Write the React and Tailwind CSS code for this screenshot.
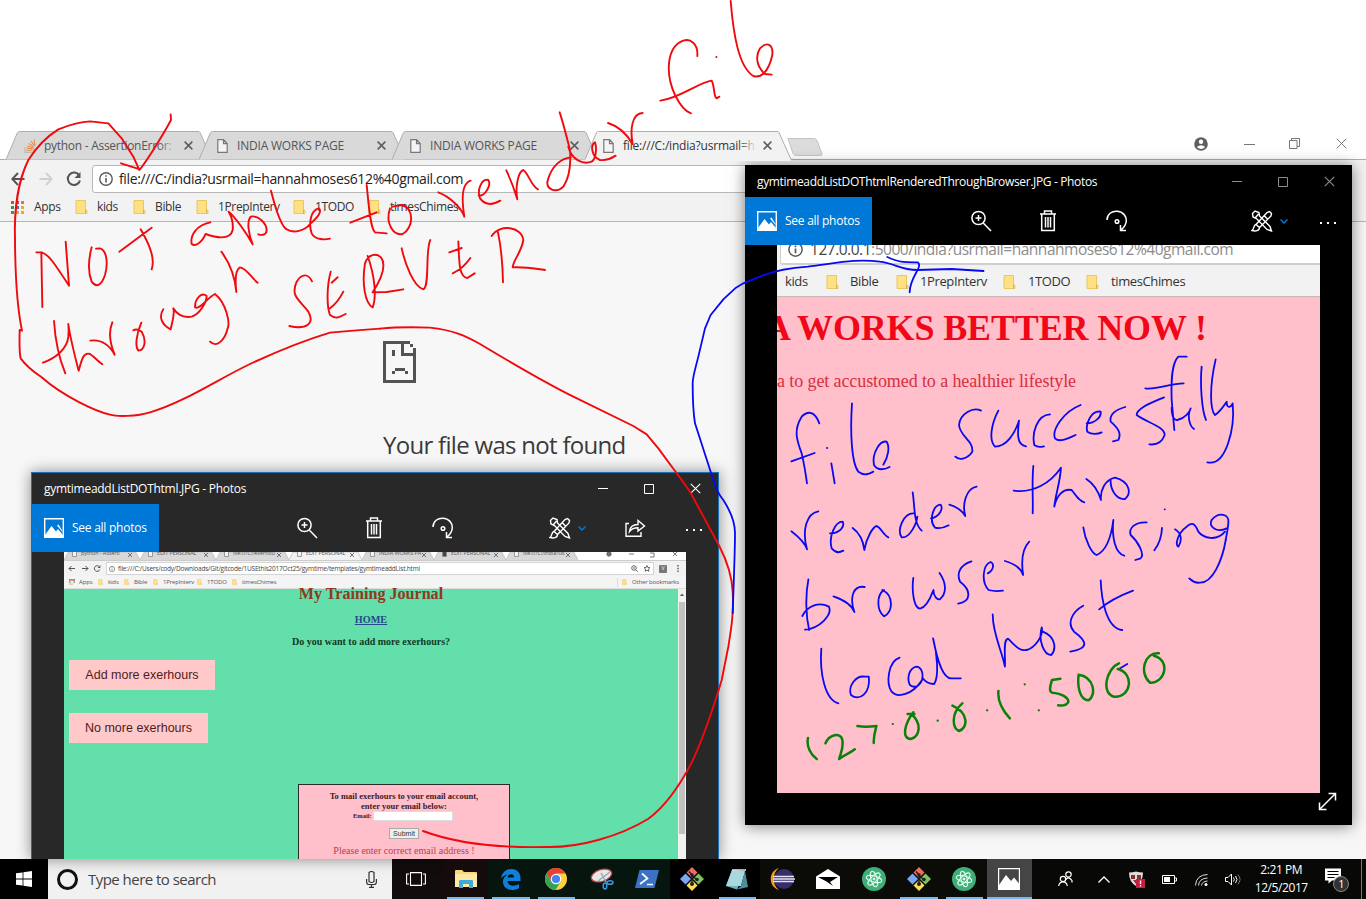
import React from "react";

const UI = "font-['Open_Sans','Noto_Sans',sans-serif]";
const SERIF = "font-['Liberation_Serif',serif]";

function FileIcon() {
  return (
    <svg width="11" height="14" viewBox="0 0 11 14" fill="#f4f4f4" stroke="#777" strokeWidth="1.2">
      <path d="M.8.7h5.8l3.6 3.8v8.8H.8zM6.5.7v4h3.7" />
    </svg>
  );
}

function StackIcon() {
  return (
    <svg width="13" height="14" viewBox="0 0 13 14" fill="none">
      <path d="M1 8v5.3h9V8" stroke="#bcbbbb" strokeWidth="1.2" />
      <path d="M2.5 11.3h6M2.7 9.3l6 .5M3.3 7l5.7 1.8M4.6 4.4l5 3.3M7 2l3.3 4.8M10 .5l1 5.8" stroke="#f08a3c" strokeWidth="1.1" />
    </svg>
  );
}

function Close({ size = 9, color = "#5a5a5a", w = 1.6 }) {
  return (
    <svg width={size} height={size} viewBox="0 0 10 10" stroke={color} strokeWidth={w}>
      <path d="M.7.7l8.6 8.6M9.3.7L.7 9.3" />
    </svg>
  );
}

function Tab({ icon, title, active, className }) {
  return (
    <div className={`relative w-[206px] h-[29px] shrink-0 flex items-center pl-[18px] -mr-[13px] ${active ? "z-10" : ""}`}>
      <svg className="absolute left-0 top-0" width="206" height="30" viewBox="0 0 206 30">
        {active && <path d="M0 28h206v2H0z" fill="#f2f2f2" />}
        <path d="M0 28.5 11.500 1.500Q12 .5 13.500 .5H192q1.500 0 2 1L206 28.500" fill={active ? "#f2f2f2" : "#d9d9d9"} stroke="#adadad" />
      </svg>
      <div className="relative w-[13px] flex">{icon}</div>
      <div className={`relative ml-[7px] w-[134px] overflow-hidden whitespace-nowrap text-[12px] ${className} ${active ? "text-[#333]" : "text-[#555]"}`}>
        {title}
        <div className={`absolute right-0 top-0 h-full w-5 bg-gradient-to-r from-transparent ${active ? "to-[#f2f2f2]" : "to-[#d9d9d9]"}`} />
      </div>
      <div className="relative ml-[6px]"><Close /></div>
    </div>
  );
}

function Folder({ s = 13 }) {
  return (
    <svg width={s} height={s + 1} viewBox="0 0 13 14">
      <path d="M1 .5h9.500v9l1.500 1v3H1z" fill="#ffe083" stroke="#e8c765" />
      <path d="M10.500 9.500v4" stroke="#d9b24a" />
    </svg>
  );
}

function Mark({ label, w, className = "" }) {
  return (
    <div className={`flex items-center shrink-0 ${w}`}>
      <Folder />
      <span className={`ml-[9px] whitespace-nowrap ${className}`}>{label}</span>
    </div>
  );
}

function InfoIcon({ s = 14 }) {
  return (
    <svg width={s} height={s} viewBox="0 0 14 14" fill="none" stroke="#5a5a5a" strokeWidth="1.400">
      <circle cx="7" cy="7" r="6.200" /><path d="M7 6v4.500M7 3.300v1.500" strokeWidth="1.600" />
    </svg>
  );
}

function Browser() {
  return (
    <div className="h-[859px] pt-[131px] flex flex-col">
      <div className="h-[29px] flex pl-[6px] shrink-0 border-b border-[#adadad]">
        <Tab icon={<StackIcon />} title="python - AssertionError:" className="tracking-[-0.28px]" />
        <Tab icon={<FileIcon />} title="INDIA WORKS PAGE" className="tracking-[-0.2px]" />
        <Tab icon={<FileIcon />} title="INDIA WORKS PAGE" className="tracking-[-0.2px]" />
        <Tab icon={<FileIcon />} title="file:///C:/india?usrmail=h" active className="tracking-[-0.2px]" />
        <svg className="mt-[7px] ml-[9px]" width="36" height="18" viewBox="0 0 36 18">
          <path d="M.8.5H27q2 0 3 2L35 16q0 1.500-1 1.500H9q-2 0-3-2z" fill="#dcdcdc" stroke="#c4c4c4" />
        </svg>
        <div className="ml-auto flex items-start pt-[6px] pr-[19px]">
          <svg width="14" height="14" viewBox="0 0 14 14"><circle cx="7" cy="7" r="6.800" fill="#5f5f5f" /><circle cx="7" cy="4.800" r="2.200" fill="#fff" /><path d="M2.800 10q4.200-3.300 8.400 0-4.200 4-8.400 0z" fill="#fff" /></svg>
          <div className="w-[11px] h-px bg-[#777] ml-[36px] mt-[7px]" />
          <svg className="ml-[34px] mt-[1px]" width="11" height="11" viewBox="0 0 11 11" fill="none" stroke="#777"><path d="M.5 2.500h7.500v8H.5zM2.500 2.500v-2h8v8H8" /></svg>
          <div className="ml-[36px] mt-[1px]"><Close size={11} color="#777" w={0.9} /></div>
        </div>
      </div>
      <div className="h-[62px] bg-[#f2f2f2] border-b border-[#b5b5b5] flex flex-col shrink-0">
        <div className="flex h-[37px] items-center pl-[11px] shrink-0">
          <svg width="14" height="14" viewBox="0 0 14 14" fill="none" stroke="#555" strokeWidth="2"><path d="M13.500 7H1.500M7 1 1.300 7 7 13" /></svg>
          <svg className="ml-[14px]" width="14" height="14" viewBox="0 0 14 14" fill="none" stroke="#d0d0d0" strokeWidth="2"><path d="M.5 7h12M7 1l5.700 6L7 13" /></svg>
          <svg className="ml-[13px]" width="16" height="16" viewBox="0 0 16 16" fill="none" stroke="#555" strokeWidth="2"><path d="M13.300 4.500A6.200 6.200 0 1 0 14 9.500" /><path d="M14.500 1v6h-6z" fill="#555" stroke="none" /></svg>
          <div className="ml-[10px] w-[1204px] h-[28px] bg-white border border-[#b8b8b8] rounded-[3px] flex items-center pl-[6px]">
            <InfoIcon />
            <span className="ml-[6px] text-[14px] tracking-[-0.36px] whitespace-nowrap text-[#222]">file:///C:/india?usrmail=hannahmoses612%40gmail.com</span>
          </div>
        </div>
        <div className="flex items-center h-[20px] pl-[11px] text-[12px] tracking-[-0.36px] text-[#333]">
          <svg width="13" height="13" viewBox="0 0 13 13">
            <path d="M0 0h3v3H0zM5 0h3v3H5z" fill="#d9483b" /><path d="M10 0h3v3h-3z" fill="#dd7a33" />
            <path d="M0 5h3v3H0z" fill="#3b8f55" /><path d="M5 5h3v3H5z" fill="#4579c9" /><path d="M10 5h3v3h-3zM10 10h3v3h-3z" fill="#e5ab2e" />
            <path d="M0 10h3v3H0z" fill="#44915b" /><path d="M5 10h3v3H5z" fill="#e5ab2e" />
          </svg>
          <span className="ml-[10px] w-[41px]">Apps</span>
          <Mark label="kids" w="w-[58px]" />
          <Mark label="Bible" w="w-[63px]" />
          <Mark label="1PrepInterv" w="w-[97px]" />
          <Mark label="1TODO" w="w-[75px]" />
          <Mark label="timesChimes" w="w-[110px]" />
        </div>
      </div>
      <div className="flex-1 bg-[#f7f7f7] pl-[383px] pt-[119px]">
        <svg width="34" height="42" viewBox="0 0 34 42" fill="none" stroke="#535353" shapeRendering="crispEdges">
          <path d="M27 1.500H1.500v39h30V7" strokeWidth="3" /><path d="M19.500 2v11h12" strokeWidth="3" />
          <path d="M27 3h3v3h-3z" fill="#535353" stroke="none" />
          <path d="M10.500 9v6M9 31.500h3M12 28.500h10M22 31.500h3" strokeWidth="3" />
        </svg>
        <div className="mt-[44px] text-[24px] leading-[36px] tracking-[-0.7px] text-[#3a3a3a]">Your file was not found</div>
      </div>
    </div>
  );
}

function Magnify() {
  return <svg width="22" height="22" viewBox="0 0 22 22" fill="none" stroke="#fff" strokeWidth="1.500"><circle cx="8.500" cy="8" r="6.600" /><path d="M13.200 13 21 21M5.500 8h6M8.500 5v6" /></svg>;
}
function Trash() {
  return <svg width="18" height="22" viewBox="0 0 18 22" fill="none" stroke="#fff" strokeWidth="1.500"><path d="M1 4h16M5.500 3.500V1h7v2.500M2.700 4v16.500h12.600V4M6.500 7v10.500M9 7v10.500M11.500 7v10.500" /></svg>;
}
function Rotate() {
  return <svg width="22" height="22" viewBox="0 0 22 22" fill="none" stroke="#fff" strokeWidth="1.500"><path d="M1 10C1 4 6 1 11 1.200c6 .3 9.500 5 9.300 9.500-.2 4-2.500 7-5.300 9.300M14.500 15v5.500H20" /><circle cx="11" cy="11.500" r="1.800" /></svg>;
}
function Tools() {
  return (
    <svg width="22" height="22" viewBox="0 0 22 22" fill="none" stroke="#fff" strokeWidth="1.400">
      <path d="M1.500 3.500 4 1l4 1.500.5 3.500L19 16.500 20.500 21 16 19.500 5.500 8.500 2 7zM4.500 7.500l3-3.500" />
      <path d="M18.500 1.500 20.500 3.500 20 6 8.500 17.500 5 14.500 16 2.500zM5 14.500c-3 .5-1.500 4.500-4 6 3.500 1 7.500.5 7.500-3M13 5.500l3.500 3.500" />
    </svg>
  );
}
function Share() {
  return <svg width="21" height="18" viewBox="0 0 21 18" fill="none" stroke="#fff" strokeWidth="1.400"><path d="M4 4.500H1v12.700h15V13M4.500 12.500C5 8 8 5.500 13 5.500V1.500L19.500 7 13 12V8.800c-4 0-6.500 1-8.500 3.700z" /></svg>;
}

function PhotoTop({ title, bg, bar, inset, share, dim, trackTitle }) {
  const c = dim ? "#8d8d8d" : "#fff";
  return (
    <>
      <div className={`shrink-0 flex items-center pl-[12px] text-[12px] text-white ${bg} ${bar}`}>
        <span className={`whitespace-nowrap ${trackTitle}`}>{title}</span>
        <div className={`ml-auto flex items-center ${inset}`}>
          <div className={`w-[10px] h-px ${dim ? "bg-[#8d8d8d]" : "bg-white"}`} />
          <svg className="ml-[36px]" width="10" height="10" viewBox="0 0 10 10" fill="none" stroke={c}><path d="M.5.5h9v9h-9z" /></svg>
          <div className="ml-[36px]"><Close size={11} color={c} w={1} /></div>
        </div>
      </div>
      <div className={`h-[48px] shrink-0 flex items-center text-[12px] text-white ${bg}`}>
        <div className="w-[127px] h-[48px] bg-[#0078d7] flex items-center pl-[12px]">
          <svg width="20" height="20" viewBox="0 0 20 20"><path d="M.7.7h18.600v18.600H.7z" fill="none" stroke="#fff" strokeWidth="1.400" /><path d="M1 17l6.500-9 4.500 5.500 2-2.500L19 17v2H1zM13 7.500l1.500-1 4 6.500v1z" fill="#fff" /></svg>
          <span className="ml-[8px] tracking-[-0.25px] whitespace-nowrap">See all photos</span>
        </div>
        <div className={share ? "ml-[137px]" : "ml-[98px]"}><Magnify /></div>
        <div className="ml-[47px]"><Trash /></div>
        <div className="ml-[49px]"><Rotate /></div>
        <div className={share ? "ml-[95px]" : "ml-[123px]"}><Tools /></div>
        <svg className="ml-[7px]" width="8" height="5" viewBox="0 0 8 5" fill="none" stroke="#0078d7" strokeWidth="1.500"><path d="M.5.5 4 4 7.500.5" /></svg>
        {share && <div className="ml-[39px]"><Share /></div>}
        <div className={`flex gap-[5px] mt-[3px] ${share ? "ml-[40px]" : "ml-[32px]"}`}>
          <i className="size-[2px] bg-white" /><i className="size-[2px] bg-white" /><i className="size-[2px] bg-white" />
        </div>
      </div>
    </>
  );
}

function MiniTab({ label, active, dark, w }) {
  return (
    <div className={`relative h-[8px] flex items-start px-[8px] shrink-0 ${w}`}>
      <svg className="absolute inset-0 w-full h-full" viewBox="0 0 70 8" preserveAspectRatio="none"><path d="M0 8 4 0H66L70 8" fill={active ? "#f2f2f2" : "#d8d8d8"} stroke="#b8b8b8" strokeWidth=".7" /></svg>
      <svg className="relative shrink-0" width="5" height="5" viewBox="0 0 5 5"><path d="M.5 0v4.500h4V0" fill={dark ? "#445" : "#f2f2f2"} stroke="#888" strokeWidth=".8" /></svg>
      <span className="relative ml-[4px] text-[5.500px] leading-[7px] -mt-[2px] tracking-[-0.1px] whitespace-nowrap text-[#555]">{label}</span>
      <svg className="relative ml-auto mt-[1px] shrink-0" width="4" height="4" viewBox="0 0 4 4" stroke="#666" strokeWidth=".9"><path d="M0 0l4 4M4 0 0 4" /></svg>
    </div>
  );
}

function JournalWindow() {
  return (
    <div className="absolute left-[31px] top-[472px] w-[688px] h-[387px] bg-[#282828] border-t border-x border-[#1b6fb5] flex flex-col overflow-hidden shadow-[0_0_14px_rgba(0,0,0,0.45)]">
      <PhotoTop title="gymtimeaddListDOThtml.JPG - Photos" bg="bg-[#282828]" bar="h-[31px]" inset="pr-[17px]" share trackTitle="tracking-[-0.27px]" />
      <div className="ml-[32px] w-[622px] flex-1 bg-[#62dfab] flex flex-col overflow-hidden">
        <div className="h-[8px] bg-white flex shrink-0">
          <MiniTab label="python - Asserti" w="w-[76px]" />
          <MiniTab label="EDIT PERSONAL" w="w-[76px]" />
          <MiniTab label="file:///C:/exerhou" w="w-[73px]" />
          <MiniTab label="EDIT PERSONAL" w="w-[73px]" active />
          <MiniTab label="INDIA WORKS PA" w="w-[72px]" />
          <MiniTab label="EDIT PERSONAL" w="w-[72px]" dark />
          <MiniTab label="file:///C:/india?us" w="w-[72px]" />
          <svg className="ml-auto mr-[8px]" width="72" height="6" viewBox="0 0 72 6" fill="none" stroke="#555" strokeWidth=".8"><circle cx="3" cy="2" r="2.200" fill="#777" /><path d="M23 2h5M44 1h4v4h-4M67 0l4 4M71 0l-4 4" /></svg>
        </div>
        <div className="h-[16px] bg-[#f2f2f2] flex items-center shrink-0 pl-[4px] text-[#555] text-[9px] border-t border-[#ccc]">
          <svg width="33" height="7" viewBox="0 0 33 7" fill="none" stroke="#555" strokeWidth="1"><path d="M7 3.500H1M3.500 1 1 3.500 3.500 6M14 3.500h6M17.500 1 20 3.500 17.500 6M31.500 2a2.800 2.800 0 1 0 .3 2.500M32 .5v2h-2" /></svg>
          <div className="ml-[5px] w-[548px] h-[13px] bg-white border border-[#d5d5d5] flex items-center pl-[2px] shrink-0">
            <InfoIcon s={6} />
            <span className="ml-[3px] text-[6.500px] tracking-[-0.2px] whitespace-nowrap text-[#444]">file:///C:/Users/cody/Downloads/Git/gitcode/1USEthis2017Oct25/gymtime/templates/gymtimeaddList.html</span>
            <svg className="ml-auto mr-[2px]" width="20" height="7" viewBox="0 0 20 7" fill="none" stroke="#555" strokeWidth=".9"><circle cx="3" cy="3" r="2.300" /><path d="m4.700 4.700 2 2M2 3h2M16 .5l.9 2 2.100.2-1.600 1.400.5 2.200-1.900-1.200-1.900 1.200.5-2.200L13 2.700l2.100-.2z" /></svg>
          </div>
          <div className="ml-[5px] w-[8px] h-[8px] bg-[#777] rounded-[1px] flex items-center justify-center text-[5px] text-white">V</div>
          <svg className="ml-auto mr-[7px]" width="2" height="7" viewBox="0 0 2 7" fill="#555"><path d="M.3 0h1.400v1.400H.3zM.3 2.800h1.400v1.400H.3zM.3 5.600h1.400V7H.3z" /></svg>
        </div>
        <div className="h-[13px] bg-[#f4f4f4] border-b border-[#ddd] flex items-center pl-[5px] text-[6px] tracking-[-0.15px] text-[#555] shrink-0">
          <svg width="6" height="6" viewBox="0 0 7 7"><path d="M0 0h2v2H0zM2.500 0h2v2h-2zM5 0h2v2H5z" fill="#d55" /><path d="M0 2.500h2v2H0zM5 2.500h2v2H5z" fill="#5a8" /><path d="M0 5h2v2H0zM2.500 5h2v2h-2z" fill="#dc8" /></svg>
          <span className="ml-[4px] w-[19px]">Apps</span>
          <Folder s={5} /><span className="ml-[5px] w-[16px]">kids</span>
          <Folder s={5} /><span className="ml-[5px] w-[19px]">Bible</span>
          <Folder s={5} /><span className="ml-[5px] w-[34px]">1PrepInterv</span>
          <Folder s={5} /><span className="ml-[5px] w-[25px]">1TODO</span>
          <Folder s={5} /><span className="ml-[5px]">timesChimes</span>
          <span className="ml-auto mr-[4px] h-[9px] border-l border-[#ddd]" /><Folder s={5} /><span className="ml-[5px] mr-[7px]">Other bookmarks</span>
        </div>
        <div className="flex flex-1">
          <div className={`w-[614px] flex flex-col ${SERIF} font-bold text-center relative`}>
            <div className="text-[16.100px] leading-[18px] text-[#8f3a20] -mt-[4px]">My Training Journal</div>
            <div className="mt-[10px] text-[10.200px] leading-[13px] text-[#28468c] underline">HOME</div>
            <div className="mt-[9px] text-[10px] leading-[13px] text-[#123a26]">Do you want to add more exerhours?</div>
            <div className="mt-[12px] ml-[5px] w-[146px] h-[30px] bg-[#ffc9c9] flex items-center justify-center font-['Liberation_Sans',sans-serif] font-normal text-[12.500px] text-[#501b20]">Add more exerhours</div>
            <div className="mt-[23px] ml-[5px] w-[139px] h-[30px] bg-[#ffc9c9] flex items-center justify-center font-['Liberation_Sans',sans-serif] font-normal text-[12.500px] text-[#501b20]">No more exerhours</div>
            <div className="mt-[41px] ml-[234px] w-[212px] h-[90px] shrink-0 bg-[#ffbfcb] border border-[#2b2b2b] text-[8.500px] leading-[10px] text-[#3c1b22] pt-[6px] whitespace-nowrap">
              <div>To mail exerhours to your email account,</div>
              <div>enter your email below:</div>
              <div className="flex items-center pl-[54px]"><span className="text-[6.500px]">Email:</span><div className="ml-[1px] w-[80px] h-[10px] bg-white border border-[#ddd]" /></div>
              <div className="mt-[7px] mx-auto w-[30px] h-[11px] bg-[#eee] border border-[#aaa] font-['Liberation_Sans',sans-serif] font-normal text-[7px] leading-[9px] text-[#333]">Submit</div>
              <div className="mt-[6px] font-normal text-[10px] leading-[12px] text-[#bb3c4c]">Please enter correct email address !</div>
            </div>
          </div>
          <div className="w-[8px] bg-[#f1f1f1] flex flex-col items-center">
            <svg className="my-[4px]" width="4" height="5" viewBox="0 0 4 5"><path d="M0 3h4L2 .5z" fill="#555" /></svg>
            <div className="w-[6px] h-[232px] bg-[#c1c1c1]" />
          </div>
        </div>
      </div>
    </div>
  );
}

function IndiaWindow() {
  return (
    <div className="absolute left-[745px] top-[165px] w-[607px] h-[660px] bg-black flex flex-col shadow-[0_1px_14px_rgba(0,0,0,0.5)]">
      <PhotoTop title="gymtimeaddListDOThtmlRenderedThroughBrowser.JPG - Photos" bg="bg-black" bar="h-[32px] pt-[1px]" inset="pr-[17px]" dim trackTitle="tracking-[-0.35px]" />
      <div className="ml-[32px] w-[543px] h-[548px] shrink-0 bg-[#ffc0cb] overflow-hidden flex flex-col">
        <div className="h-[52px] shrink-0 bg-[#f2f2f2] border-b border-[#c8b8bb] flex flex-col">
          <div className="h-[20px] shrink-0 ml-[3px] bg-white border-b-2 border-l border-[#cfcfcf] rounded-bl-[3px] flex overflow-hidden pl-[7px]">
            <div className="-mt-[3px]"><InfoIcon s={15} /></div>
            <div className="ml-[7px] -mt-[8px] text-[15.500px] leading-[24px] tracking-[-0.48px] whitespace-nowrap text-[#8c8c8c]"><span className="text-[#444]">127.0.0.1</span>:5000/india?usrmail=hannahmoses612%40gmail.com</div>
          </div>
          <div className="flex items-center h-[31px] pt-[2px] pl-[8px] text-[13px] tracking-[-0.38px] text-[#333]">
            <span className="w-[41px]">kids</span>
            <Mark label="Bible" w="w-[70px]" className="pl-[2px]" />
            <Mark label="1PrepInterv" w="w-[107px]" className="pl-[2px]" />
            <Mark label="1TODO" w="w-[83px]" className="pl-[3px]" />
            <Mark label="timesChimes" w="w-[120px]" className="pl-[3px]" />
          </div>
        </div>
        <div className={`${SERIF} flex flex-col items-start`}>
          <div className="-ml-[12px] mt-[11px] text-[36px] leading-[40px] tracking-[-0.15px] font-bold whitespace-nowrap text-[#f00818]">A WORKS BETTER NOW !</div>
          <div className="mt-[22px] text-[18px] leading-[22px] tracking-[-0.1px] whitespace-nowrap text-[#d82f3f]">a to get accustomed to a healthier lifestyle</div>
        </div>
      </div>
      <div className="flex justify-end pr-[15px] -mt-px">
        <svg width="19" height="19" viewBox="0 0 19 19" fill="none" stroke="#fff" strokeWidth="1.500"><path d="M1.500 17.500l16-16M10.500 1.500h7v7M1.500 10.500v7h7" /></svg>
      </div>
    </div>
  );
}

function Explorer() {
  return <svg width="22" height="20" viewBox="0 0 22 20"><path d="M0 2q0-1 1-1h6l2 2h12q1 0 1 1v14H0z" fill="#f8d775" /><path d="M0 5h22v13H0z" fill="#ffe9a2" /><path d="M4 19v-7q0-1 1-1h12q1 0 1 1v7h-4v-4H8v4z" fill="#3fa9dc" /></svg>;
}
function Edge() {
  return <svg width="20" height="21" viewBox="0 0 20 21"><path d="M0 9.500C1 3.500 5 0 10.500 0 16.500 0 19.500 4.500 19.500 9.500V12H6.500c.3 5 6.500 6 11.500 3v4.200C11 23 2.200 20.500 2 13c0-4 2.200-6.200 5-7.500C4.500 5.700 1.800 7 0 9.500zM6.700 8.500h6.500c0-4.500-5.800-4.500-6.500 0z" fill="#0f7fdc" fillRule="evenodd" /></svg>;
}
function Chrome() {
  return (
    <svg width="22" height="22" viewBox="0 0 22 22">
      <circle cx="11" cy="11" r="11" fill="#fcd13b" /><path d="M1.500 5.500a11 11 0 0 1 19 0H11L6.200 13.700z" fill="#e34133" /><path d="M1.500 5.500a11 11 0 0 0 9 16.500l5-8.300-4.500 2-4.800-2z" fill="#34a353" />
      <circle cx="11" cy="11" r="5.300" fill="#fff" /><circle cx="11" cy="11" r="4.100" fill="#4285f4" />
    </svg>
  );
}
function Snip() {
  return <svg width="24" height="22" viewBox="0 0 24 22" fill="none"><ellipse cx="11.500" cy="7.500" rx="10.500" ry="5.800" fill="#e7e7ea" stroke="#c0464b" strokeWidth="1.300" transform="rotate(-18 11.500 7.500)" /><path d="m8 13 12-9M11 5l5 9" stroke="#9ba6b0" strokeWidth="1.500" /><ellipse cx="15" cy="18" rx="1.800" ry="3" stroke="#3b9ae0" strokeWidth="1.500" /><ellipse cx="20" cy="14.500" rx="3" ry="1.800" stroke="#3b9ae0" strokeWidth="1.500" /></svg>;
}
function Shell() {
  return <svg width="24" height="18" viewBox="0 0 24 18"><path d="M4.500 0H24l-4.500 18H0z" fill="#3c72c4" /><path d="m7 3.500 5.500 5L5 14M12 14.500h6" fill="none" stroke="#fff" strokeWidth="1.700" /></svg>;
}
function Git() {
  return (
    <svg width="24" height="24" viewBox="0 0 24 24">
      <path d="m12 0 5.500 5.500L12 11 6.500 5.500z" fill="#ee6a62" /><path d="m18.500 6.500 5.500 5.500-5.500 5.500L13 12z" fill="#80c25d" /><path d="m12 13 5.500 5.500L12 24l-5.500-5.500z" fill="#fadd55" /><path d="m5.500 6.500 5.500 5.500-5.500 5.500L0 12z" fill="#7ba8f4" />
      <path d="M9 4.500 12 8v9M12.500 9l4 3.500" stroke="#222" strokeWidth="1.500" fill="none" /><circle cx="12" cy="17" r="2" fill="#222" /><circle cx="12" cy="8" r="1.800" fill="#222" /><circle cx="17" cy="12.500" r="1.800" fill="#222" />
    </svg>
  );
}
function Note() {
  return <svg width="23" height="21" viewBox="0 0 23 21"><path d="M6 1 0 17l11 3.500L19 3z" fill="#6fb2bd" /><path d="M6 1 19 2 15 17 0 17z" fill="#a6d8de" /><path d="m19 2 3 16-11 2.500L15 17z" fill="#4f8f9c" /><path d="M6 1h14" stroke="#dfeef0" strokeWidth="1.500" /></svg>;
}
function Eclipse() {
  return <svg width="25" height="22" viewBox="0 0 25 22"><path d="M9 0C-2 3-2 19 9 22 2 17 2 5 9 0z" fill="#f09a28" /><circle cx="14" cy="11" r="10" fill="#3a2c6b" /><path d="M3 8.500h21M3 11h22M3 13.500h21" stroke="#e6e3f2" strokeWidth="1.300" /></svg>;
}
function Mail() {
  return <svg width="24" height="20" viewBox="0 0 24 20"><path d="M0 7.500 12 0l12 7.500V20H0z" fill="#fff" /><path d="M2 8h20l-8 5 3 4-6.500-4.500z" fill="#000" /></svg>;
}
function Atom() {
  return <svg width="24" height="24" viewBox="0 0 24 24" fill="none" stroke="#e3fff0" strokeWidth="1"><circle cx="12" cy="12" r="12" fill="#3fae79" stroke="none" /><ellipse cx="12" cy="12" rx="8" ry="3" transform="rotate(15 12 12)" /><ellipse cx="12" cy="12" rx="8" ry="3" transform="rotate(75 12 12)" /><ellipse cx="12" cy="12" rx="8" ry="3" transform="rotate(135 12 12)" /><circle cx="12" cy="12" r="1" fill="#fff" /></svg>;
}
function Pic() {
  return <svg width="22" height="22" viewBox="0 0 22 22"><path d="M.6.600h20.800v20.800H.6z" fill="none" stroke="#fff" strokeWidth="1.200" /><path d="M1 17 8 7l5 6 3-3.500 5 6V21H1z" fill="#fff" /></svg>;
}

const apps = [
  { I: Explorer, on: true }, { I: Edge, on: true }, { I: Chrome, on: true }, { I: Snip }, { I: Shell }, { I: Git },
  { I: Note, on: true }, { I: Eclipse }, { I: Mail }, { I: Atom }, { I: Git, on: true }, { I: Atom, on: true }, { I: Pic, on: true, hot: true },
];

function Taskbar() {
  return (
    <div className="h-[40px] bg-black flex text-white">
      <div className="w-[48px] flex items-center justify-center">
        <svg width="16" height="16" viewBox="0 0 16 16" fill="#fff"><path d="M0 2.300 6.600 1.400v6.200H0zM7.400 1.300 16 0v7.600H7.400zM0 8.400h6.600v6.200L0 13.700zM7.400 8.400H16V16l-8.600-1.300z" /></svg>
      </div>
      <div className="w-[344px] bg-[#f1f1f1] flex items-center pl-[9px]">
        <div className="size-[21px] rounded-full border-[3px] border-[#111]" />
        <span className="ml-[10px] text-[15px] tracking-[-0.53px] text-[#444]">Type here to search</span>
        <svg className="ml-auto mr-[15px]" width="11" height="17" viewBox="0 0 11 17" fill="none" stroke="#333" strokeWidth="1.200"><path d="M3 1.500q2.500-2 5 0v9q-2.500 2-5 0zM.6 8v3q0 2.500 2.500 2.500h4.800q2.500 0 2.500-2.500V8M5.500 13.500V16.500M3 16.400h5" /></svg>
      </div>
      <div className="w-[51px] pl-[14px] flex items-center bg-[#120c0d]">
        <svg width="20" height="14" viewBox="0 0 20 14" fill="none" stroke="#fff" strokeWidth="1.100"><path d="M4.500.6h11v12.800h-11zM3 2H.6v10H3M17 2h2.400v10H17" /></svg>
      </div>
      {apps.map(({ I, on, hot }, i) => (
        <div key={i} className={`relative w-[45.330px] shrink-0 flex items-center justify-center ${hot ? "bg-[#454545] pr-[2px]" : i < 1 ? "bg-[#150b0d]" : i < 5 ? "bg-[#07150f]" : i < 7 ? "bg-black" : "bg-[#0b0c08]"}`}>
          <I />
          {on && <div className={`absolute bottom-0 h-[2px] bg-[#76b9ed] ${hot ? "inset-x-0" : "inset-x-[4px]"}`} />}
        </div>
      ))}
      <div className="flex flex-1 items-center bg-[#080906]">
        <div className="ml-[10px] w-[46px] flex justify-center"><svg width="15" height="16" viewBox="0 0 15 16" fill="none" stroke="#fff" strokeWidth="1.200"><circle cx="10.500" cy="3.500" r="2.700" /><path d="M7.500 9q3-4.500 6.500.5v2" /><circle cx="5" cy="8" r="2.700" /><path d="M.7 15q.5-4.200 4.300-4.200T9.300 15" /></svg></div>
        <div className="w-[32px] flex justify-center"><svg width="12" height="7" viewBox="0 0 12 7" fill="none" stroke="#fff" strokeWidth="1.300"><path d="m.5 6.500 5.500-5.500 5.500 5.500" /></svg></div>
        <div className="w-[33px] flex justify-center"><svg width="16" height="17" viewBox="0 0 16 17"><path d="M0 1.500q4 0 7-1 3 1 7 1 0 9-7 13.500Q0 11 0 1.500z" fill="#ddd" /><path d="M2 4h4v4H2zM8 4h4v4H8zM4 9h3v4z" fill="#833" /><path d="M7 8h9v9H7z" fill="#c31f42" /><path d="M11.500 9.500v3.500M11.500 14v1.500" stroke="#fff" strokeWidth="1.400" /></svg></div>
        <div className="w-[32px] flex justify-center"><svg width="15" height="9" viewBox="0 0 15 9"><path d="M.5.5h12v8H.5zM13 3h1.500v3H13" fill="none" stroke="#fff" /><path d="M2 2h6v5H2z" fill="#fff" /></svg></div>
        <div className="w-[33px] flex justify-center"><svg className="mt-[2px]" width="13" height="12" viewBox="0 0 13 12" fill="none" stroke="#ddd" strokeWidth="1"><path d="M.5 11.500Q1 1 12.500.5M3.500 11.500Q4 4.500 12.500 4M6.500 11.500Q7 7.500 12.500 7" /><circle cx="11" cy="10.500" r="1.500" fill="#fff" stroke="none" /></svg></div>
        <div className="w-[30px] flex justify-center"><svg width="17" height="13" viewBox="0 0 17 13" fill="none" stroke="#fff"><path d="M.5 4.500h2.500L6.500 1v11L3 8.500H.5z" /><path d="M8.500 4.500q1.500 2 0 4M10.500 3q3 3.500 0 7" /><path d="M12.800 1.500q4.500 5 0 10" stroke="#777" /></svg></div>
        <div className="w-[66px] flex flex-col items-center text-[12px] leading-[18px] tracking-[-0.42px] whitespace-nowrap"><span>2:21 PM</span><span>12/5/2017</span></div>
        <div className="relative ml-[11px]"><svg width="26" height="25" viewBox="0 0 26 25"><path d="M0 1.500h16v12H7l-3.500 3v-3H0z" fill="#fff" /><path d="M2.500 4.500h11M2.500 7.500h11M2.500 10.500h7" stroke="#000" /><circle cx="16" cy="17" r="7.500" fill="#333" stroke="#888" /></svg><span className="absolute left-[13px] top-[9px] text-[11px] leading-[16px]">1</span></div>
        <div className="ml-auto mr-[4px] h-full w-px bg-[#777]" />
      </div>
    </div>
  );
}

/* Pen strokes, grouped by the area of the desktop they sit on. */
function Ink() {
  const ve = { vectorEffect: "non-scaling-stroke" };
  return (
    <svg className="absolute inset-0 pointer-events-none z-30" width="1366" height="899" viewBox="0 0 1366 899" fill="none" strokeLinecap="round" strokeLinejoin="round">
      <g stroke="#f00a0e" strokeWidth="1.900">
        <g transform="translate(0 100) scale(.33333)">
          <path {...ve} d="M45 420C42 330 55 240 85 180C110 140 140 110 175 88C215 72 245 65 270 64L325 70L365 115L400 170L418 210M363 190L420 208C450 170 500 85 513 60L512 43" />
          <path {...ve} d="M813 272C825 320 840 375 860 388C880 402 915 392 930 372C955 350 966 335 957 325C932 330 925 370 935 400C945 420 975 420 990 416M1051 368L1130 337M1100 255C1105 300 1110 385 1125 397L1160 400M1170 325C1155 370 1180 408 1208 402C1240 385 1245 325 1205 315L1178 320" />
          <path {...ve} d="M631 367C590 375 570 405 575 432C585 440 605 430 617 402C640 410 690 425 698 390C700 370 695 350 686 335C705 350 740 400 758 433C745 400 740 365 752 350C775 345 800 370 800 392C798 408 782 405 775 403" />
        </g>
        <g transform="scale(.33333) translate(1200 0)">
          <path {...ve} d="M115 577C150 590 185 625 193 650C185 600 185 550 212 542M236 587C255 590 275 555 265 540C245 535 230 570 240 595C255 615 275 617 301 602M319 511C335 545 345 575 352 598C345 560 355 515 370 510C385 520 395 560 414 568M512 472C485 475 455 495 442 545C440 570 470 580 490 560C510 530 513 490 510 450C500 410 490 370 479 337M505 440C515 480 550 495 575 485C590 475 590 440 585 427C570 435 575 470 600 480C620 482 635 475 647 467M624 369C660 380 685 410 698 432C690 390 695 340 728 339" />
          <path {...ve} d="M892 168C895 130 870 115 850 122C800 140 795 220 825 285C840 315 855 335 873 340M781 302C840 295 900 245 935 242C945 260 940 290 950 295L958 290M949 171h.5M992 3C1000 100 1015 200 1060 228C1080 235 1105 220 1117 165C1120 130 1100 125 1080 145C1065 170 1070 200 1095 222L1115 224" />
        </g>
        <g transform="translate(0 220) scale(.33333)">
          <path {...ve} d="M45 60C46 200 55 280 66 332L59 330C58 370 58 400 62 415C80 440 100 455 125 472C190 530 290 575 330 584C350 590 410 590 450 577C550 548 650 480 750 432C830 395 900 365 990 338L1060 332L1140 326" />
          <path {...ve} d="M127 261L124 100M109 97L125 97C145 103 160 125 207 197L197 65M275 82C265 120 265 160 275 185C290 205 305 195 315 165C325 130 320 90 300 85L288 86M358 95L455 23M422 28C440 60 468 110 455 148" />
          <path {...ve} d="M162 303C165 350 175 410 196 460M129 428C165 415 190 395 202 365C208 345 206 330 205 312C210 350 225 410 236 452C245 420 250 395 270 402C285 412 295 425 307 433M271 362C300 358 325 370 344 404C330 370 325 335 337 307M424 308C408 345 405 380 415 392C435 390 440 360 425 335C415 328 405 328 400 331M490 268C475 290 485 315 512 328C518 300 525 280 520 265C535 290 555 293 575 290C600 283 620 245 620 228C605 215 585 235 585 262C600 270 620 235 645 222C680 250 690 310 683 325C675 360 650 385 630 365M664 95C690 130 705 170 709 216C705 180 705 150 720 142C740 145 755 175 773 188" />
          <path {...ve} d="M936 184C925 160 905 160 890 185C870 230 900 240 925 275C945 310 920 330 868 318M992 155C980 200 980 260 990 285C1010 300 1020 290 1037 282M995 188L1013 172M990 265C1010 250 1020 235 1030 215M1103 108C1125 170 1130 230 1118 262C1095 250 1085 190 1095 130C1105 100 1130 100 1143 112C1160 135 1145 175 1118 217L1160 216L1210 208" />
        </g>
        <g transform="translate(380 220) scale(.33333)">
          <path {...ve} d="M0 326C60 320 100 321 150 323C220 330 260 350 300 372C380 420 480 480 580 530L760 618L800 643L835 685L905 780" />
          <path {...ve} d="M65 85C75 130 100 200 130 208C150 200 135 90 151 60M235 64C238 120 235 170 262 174L284 160M208 97L245 84M218 160C240 150 260 130 271 114M354 37C365 90 368 130 369 187M335 48C360 10 425 20 430 60C425 95 400 120 398 142C430 140 460 145 495 150" />
        </g>
        <path d="M681.700 480L690 491.700L719.300 546C728 563 732 577 732.700 591.700C734 613 731 630 728.300 646.700L721.700 680C714 706 704 736 692 762C680 785 666 806 648 819C620 836 580 848 545 847C500 848 455 843 423 831" />
      </g>
      <g stroke="#0808f2" strokeWidth="1.800">
        <g transform="translate(380 220) scale(.33333)">
          <path {...ve} d="M1140 170L1090 190L1068 203L1030 238L992 285L975 325L955 410C945 450 938 470 938 490C938 550 940 580 945 610L1000 780" />
        </g>
        <path d="M713.300 480C715 486 719 495 723.300 500C731.700 513 735 523 735 533C735 553 733.500 587 732.700 613" />
        <g transform="translate(740 120) scale(.39923 .33333)">
          <path {...ve} d="M50 470C90 450 130 443 170 440C240 430 290 415 350 425C390 430 400 450 445 450L530 447L610 453M369 411C400 428 410 427 445 427C460 440 425 470 425 517" />
        </g>
        <g transform="translate(770 300) scale(.33333)">
          <path {...ve} d="M148 370C135 335 115 330 95 350C70 390 80 420 95 460C102 490 107 520 111 550M64 484L134 459M184 490L194 550M171 444h.5M246 310C240 400 245 490 265 515C285 530 300 520 310 515M340 494C355 470 360 440 350 425C330 420 305 460 312 495C325 515 345 508 359 501" />
          <path {...ve} d="M633 332C610 320 570 340 567 375C570 410 610 420 607 455C590 480 565 480 556 470M685 332C665 370 655 420 675 440C710 440 735 400 747 362C742 400 740 435 768 439M840 343C800 345 785 400 793 435C805 445 815 440 822 439M932 315C880 335 845 390 855 415C870 430 900 412 917 405M950 370C975 370 995 350 992 335C965 330 945 370 952 395C965 405 985 402 995 397M1066 321C1035 330 1018 345 1022 365C1045 385 1055 400 1045 420L1029 424M1182 292C1140 310 1100 325 1100 345C1125 365 1185 380 1184 405C1175 430 1155 435 1138 433" />
          <path {...ve} d="M1250 170L1225 170C1205 190 1203 240 1205 300L1213 390M1126 265C1160 270 1200 250 1241 250M1205 322C1205 350 1212 362 1222 360C1245 355 1260 335 1262 325C1250 350 1260 380 1272 387M1295 200C1290 250 1295 330 1308 360M1337 178C1318 260 1320 330 1335 345C1350 335 1360 320 1370 305C1370 330 1385 320 1388 310C1395 380 1370 500 1312 487" />
          <path {...ve} d="M64 694C85 710 105 730 111 748C95 690 110 640 145 634M180 700C210 700 225 680 218 665C195 665 175 710 185 745C200 762 210 757 220 752M248 684C270 700 280 725 283 750C290 710 310 680 320 678C335 685 340 705 355 712M428 577C435 620 430 670 455 692M430 640C400 640 380 690 395 712C420 715 440 670 442 650M483 655C510 650 520 625 512 614C490 615 475 660 495 683C510 687 525 682 536 676M538 614C560 620 580 635 586 648C575 610 590 565 620 560" />
          <path {...ve} d="M790 498C785 550 790 600 788 640M731 572C790 580 840 550 873 503C870 550 855 590 853 620C860 585 880 565 905 570C920 590 930 605 943 607M949 537C970 550 985 575 993 600C990 570 1005 540 1035 533M1022 538C1020 570 1040 600 1065 597C1085 580 1080 545 1035 533" />
          <path {...ve} d="M940 682C945 720 965 760 980 765C1015 750 1025 700 1030 660C1025 710 1035 760 1063 767M1130 667C1095 665 1075 685 1082 705C1105 725 1125 765 1112 775L1096 780M1176 684C1175 710 1165 735 1153 751M1184 628h.5M1215 688C1235 700 1237 720 1225 740C1215 735 1222 700 1250 680C1265 665 1275 670 1285 695C1300 715 1340 725 1365 695M1370 685C1340 700 1315 680 1325 660C1345 635 1380 640 1375 670C1373 690 1370 705 1367 720" />
        </g>
        <g transform="translate(770 540) scale(.3801 .33333)">
          <path {...ve} d="M1199 0C1190 60 1165 130 1130 128C1115 130 1108 120 1103 115M101 118C92 170 95 230 103 270M85 228C100 195 130 185 155 200C165 225 130 265 92 269M167 169C195 180 215 195 222 216C208 170 220 135 249 141M300 150C280 165 280 210 300 229C325 215 325 165 295 150M377 114C372 160 380 205 395 206C415 200 425 165 430 150C430 170 440 180 447 178C465 160 465 130 446 99M530 64C500 75 490 100 500 125C530 150 530 185 495 191M573 100C590 90 590 70 580 66C560 75 555 125 575 150C590 155 600 154 613 152M618 63C640 70 660 85 666 105C660 60 665 25 682 5" />
          <path {...ve} d="M135 326C130 400 145 480 180 490M250 410C225 405 205 440 213 465C235 485 265 460 260 410L245 410M341 353C310 365 305 430 320 455C335 475 375 465 400 420C405 395 395 380 385 380C365 385 360 415 368 435C385 450 398 430 402 415C408 425 420 432 432 432C445 410 440 340 429 295C440 360 455 420 480 415L502 415" />
          <path {...ve} d="M586 223C585 280 610 330 618 380C620 350 612 300 626 296C640 310 655 335 675 330C695 325 720 290 715 262C705 300 720 345 740 345C755 325 750 290 718 275M824 197C795 215 780 250 800 275C830 300 845 325 790 335M870 121C872 180 885 265 927 270M866 208C895 180 925 165 955 152M918 387L940 372" />
        </g>
      </g>
      <g stroke="#0a820a" strokeWidth="2.500" transform="translate(770 540) scale(.3801 .33333)">
        <path {...ve} d="M100 594C95 620 108 645 123 657M146 610C155 585 185 575 190 598C195 625 185 640 182 657C195 645 210 640 223 628M230 558C250 562 265 560 280 558C275 580 272 590 273 609M362 522L380 522M377 517C355 550 345 595 370 597C395 590 400 550 372 522M506 490C475 520 480 565 497 573C520 565 525 520 480 497M601 453C598 485 615 515 631 535M764 416L742 420C735 445 735 455 742 458C770 460 785 475 785 485C780 498 770 498 758 496M812 404C808 440 815 480 838 481C860 465 852 410 812 404M918 370C885 385 870 460 905 470C950 475 960 400 915 387M1023 340C985 335 970 400 1000 428C1040 430 1055 360 1010 347" />
        <path {...ve} strokeWidth="2.200" d="M323 552h.5M441 542h.5M571 511h.5M670 433h.5M707 511h.5" />
      </g>
    </svg>
  );
}

export default function App() {
  return (
    <div className={`relative w-[1366px] h-[899px] overflow-hidden bg-white ${UI}`}>
      <Browser />
      <JournalWindow />
      <IndiaWindow />
      <Taskbar />
      <Ink />
    </div>
  );
}
